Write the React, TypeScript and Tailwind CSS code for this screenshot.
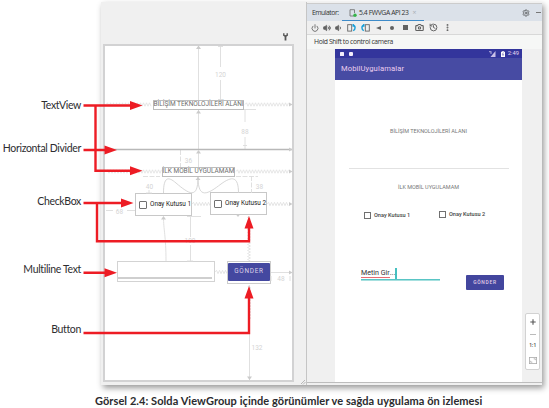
import React from "react";
import { Settings, Power, Volume2, Volume1, Camera, History, MoreVertical } from "lucide-react";

function zigzag(x1: number, x2: number, y: number) {
  let d = `M${x1} ${y}`;
  let up = true;
  for (let x = x1 + 1.5; x <= x2; x += 1.5) {
    d += ` L${x} ${up ? y - 1.7 : y + 1.7}`;
    up = !up;
  }
  return d;
}

function zigzagDown(x: number, y1: number, y2: number) {
  let d = `M${x} ${y1}`;
  let left = true;
  for (let y = y1 + 1.5; y <= y2; y += 1.5) {
    d += ` L${left ? x - 1.5 : x + 1.5} ${y}`;
    left = !left;
  }
  return d;
}

function Label({ children, className }: { children: string; className: string }) {
  return (
    <div className={`flex h-4 items-center justify-end whitespace-nowrap pr-5 text-[10.5px] tracking-[-0.34px] text-[#2d2d30] ${className}`}>
      {children}
    </div>
  );
}

/* Constraint handles, springs and margin values of the blueprint */
function Constraints() {
  return (
    <svg className="pointer-events-none absolute left-0 top-0" width="549" height="408" fill="none" stroke="#dcdcdc" strokeWidth="0.9">
      <path d="M198.5 47V100M198.5 110V149M198.5 151V167M220.5 46V67M220.5 80V100M218 46.5H223M218 99.5H223M245 110V122M245 137V149M243 145.5H247M244 109.5H256" />
      <path d="M180.5 150V167M251.5 176V193M143 176.5H160M236 176.5H258" strokeDasharray="5 1.5" />
      <path d="M149 190V193M146 193H152" />
      <path d="M163.5 193C163.5 177 168 176 176 183C189 194 198 200 198 177M238.5 193C238.5 176 232 176 221 184C208 194 198 200 198 177" stroke="#d2d2d2" />
      <path d="M106 210.5H113M127 210.5H135M163.5 217C163.5 230 166 236 166 261M190.5 217V237M190.5 245V261M187 216.5H201M187 261H193" />
      <path d="M249.5 285V380M271 272.5H291M271 276V281M290 276V281" />
      <path d="M105.5 149.5H292" stroke="#b8b8b8" strokeWidth="1.4" />
      <g strokeWidth="0.8" stroke="#e0e0e0">
        <path d={zigzag(106, 152, 104.5)} />
        <path d={zigzag(245, 289, 104.5)} />
        <path d={zigzag(106, 162, 171.5)} />
        <path d={zigzag(236, 289, 171.5)} />
        <path d={zigzag(192, 210, 204)} />
        <path d={zigzag(267, 289, 204)} />
        <path d={zigzag(215, 227, 272)} />
        <path d={zigzagDown(249, 216, 261)} />
        <path d={zigzagDown(249.5, 285, 320)} />
      </g>
      <g stroke="none" fill="#cbcbcb">
        <path d="M198.5 45.5L201 49H196ZM198.5 110L201 113.5H196ZM198.5 150L201 153.5H196ZM198 177L200.5 180H195.5ZM163.5 216L166 219.5H161ZM249.5 380L252 376.5H247ZM240 214.5H236L238 217Z" />
        <path d="M292.5 104.5L289 102.5V106.5ZM292.5 171.5L289 169.5V173.5ZM292.5 204L289 202V206ZM292.5 272.5L289 270.5V274.5ZM292.5 149.5L289 147.5V151.5Z" />
      </g>
      <g stroke="none" fill="#d4d4d4" fontFamily="Roboto, sans-serif" fontSize="6.5" textAnchor="middle">
        <text x="220.5" y="76.5">120</text>
        <text x="245" y="133.5">88</text>
        <text x="188.5" y="162.5">36</text>
        <text x="149.5" y="189">40</text>
        <text x="259.5" y="188.5">38</text>
        <text x="119.5" y="213.5">68</text>
        <text x="190" y="242.5">100</text>
        <text x="281" y="281">48</text>
        <text x="257" y="350">132</text>
      </g>
    </svg>
  );
}

/* Red callout arrows joining the labels to the views */
function Arrows() {
  return (
    <svg className="pointer-events-none absolute left-0 top-0" width="549" height="408" fill="none" stroke="#ed1c24" strokeWidth="2.4">
      <path d="M83.5 105.5H132M95.5 105.5V170.7H132" />
      <path d="M83.5 150H106M83.5 272.8H106" />
      <path d="M83.5 203H123M97 203V241.3H249V227" />
      <path d="M83.5 333H249V297" />
      <g fill="#ed1c24" stroke="none">
        <path d="M142.5 105.5L130 101V110ZM142.5 170.7L130 166.2V175.2ZM117 150L104.5 145.5V154.5ZM133.5 203L121 198.5V207.5ZM117 272.8L104.5 268.3V277.3Z" />
        <path d="M249 216L244.5 228.5H253.5ZM249 286L244.5 298.5H253.5Z" />
      </g>
    </svg>
  );
}

/* Views dropped on the layout editor's canvas, offsets relative to the canvas */
function DesignCanvas() {
  return (
    <div className="relative ml-[2px] mt-[42px] h-[338px] w-[191px] border-2 border-[#d2d2d3] bg-white font-[Roboto,sans-serif] text-[#6e6e6e]">
      <div className="absolute left-[48px] top-[54px] flex h-[10px] w-[91px] items-center justify-center whitespace-nowrap border border-[#bdbdbd] bg-white text-[6.5px] tracking-[-0.02px]">
        BİLİŞİM TEKNOLOJİLERİ ALANI
      </div>
      <div className="absolute left-[57px] top-[121px] flex h-[10px] w-[73px] items-center justify-center whitespace-nowrap border border-[#bdbdbd] bg-white text-[6.5px] tracking-[-0.02px]">
        İLK MOBİL UYGULAMAM
      </div>
      <BlueprintCheck className="left-[30px] top-[147px]" text="Onay Kutusu 1" />
      <BlueprintCheck className="left-[105px] top-[146px]" text="Onay Kutusu 2" />
      <div className="absolute left-[12px] top-[215px] flex h-[21px] w-[98px] items-end border border-[#d3d3d3] bg-white pb-[2px] pr-[2px]">
        <div className="h-[2px] w-full bg-[#cfcfcf]" />
      </div>
      <div className="absolute left-[122px] top-[215px] h-[23px] w-[44px] border border-[#ccc] bg-white pt-px">
        <div className="flex h-[18px] items-center justify-center rounded-[1px] bg-[#4448a0] text-[6.4px] tracking-[0.72px] text-[#ded2e8]">
          GÖNDER
        </div>
      </div>
    </div>
  );
}

function BlueprintCheck({ text, className }: { text: string; className: string }) {
  return (
    <div className={`absolute flex h-[23px] w-[57px] items-center gap-[3px] whitespace-nowrap border border-[#c8c8c8] bg-white pl-[3px] ${className}`}>
      <span className="size-[8px] shrink-0 rounded-[1px] border border-[#707070]" />
      <span className="text-[6.4px] text-[#222]">{text}</span>
    </div>
  );
}

function PhoneCheck({ text, className }: { text: string; className: string }) {
  return (
    <div className={`flex w-[75px] items-center gap-[3px] whitespace-nowrap ${className}`}>
      <span className="size-[7px] shrink-0 border border-[#707070]" />
      <span className="text-[5.6px] font-medium leading-[8px] text-[#444]">{text}</span>
    </div>
  );
}

function RotateIcon({ flip = false }: { flip?: boolean }) {
  return (
    <svg width="9" height="8" viewBox="0 0 9 8" fill="none" className={flip ? "-scale-x-100" : ""}>
      <rect x="0.7" y="0.7" width="4" height="6.4" stroke="#666" strokeWidth="0.9" />
      <path d="M6 1.3C8.7 1.6 8.7 5.5 6.2 6.7M6.2 0V2.8" stroke="#169fd8" strokeWidth="1.4" />
    </svg>
  );
}

function Phone() {
  return (
    <div className="flex h-[333px] w-[187px] flex-col bg-white font-[Roboto,sans-serif]">
      <div className="flex h-[9px] shrink-0 items-center bg-[#33359c] pl-[5px] pr-[3px] text-white">
        <span className="size-[4px] rounded-[0.5px] bg-[#f3eefa]" />
        <span className="ml-[5px] size-[4px] rounded-[1px] bg-[#f3eefa]" />
        <svg className="ml-auto mr-[5px]" width="7" height="6" viewBox="0 0 7 6">
          <path d="M0 0.7H2.5M1 2H3" stroke="#d6ccee" strokeWidth="0.8" />
          <path d="M6.5 0V6H1.5Z" fill="#c9c0e7" />
        </svg>
        <svg width="4" height="6" viewBox="0 0 4 6">
          <path d="M1.3 0H2.7V0.7H4V6H0V0.7H1.3Z" fill="#fff" />
          <path d="M2.4 1.5L1.3 3.5H2.6L1.7 5" fill="none" stroke="#5555a8" strokeWidth="0.6" />
        </svg>
        <span className="ml-[3px] text-[5.8px] leading-none text-[#e6dcf2]">2:49</span>
      </div>
      <div className="flex h-[22px] shrink-0 items-center bg-[#474ba3] pl-[6px] text-[7.6px] tracking-[0.12px] text-[#eccfef]">
        MobilUygulamalar
      </div>
      <div className="mt-[47px] text-center text-[5.5px] leading-[8px] text-[#777]">BİLİŞİM TEKNOLOJİLERİ ALANI</div>
      <div className="ml-[14px] mt-[33px] h-px w-[160px] bg-[#e2e2e2]" />
      <div className="mt-[14px] text-center text-[5.5px] leading-[8px] text-[#777]">İLK MOBİL UYGULAMAM</div>
      <div className="mt-[19px] flex pl-[29px]">
        <PhoneCheck text="Onay Kutusu 1" className="pt-px" />
        <PhoneCheck text="Onay Kutusu 2" className="pb-px" />
      </div>
      <div className="mt-[49px] flex items-start pl-[26px]">
        <div className="flex h-[12px] w-[79px] items-start border-b border-[#59c5c5] text-[7.1px] leading-[10px] text-[#333] shadow-[0_1px_0_#a6e0df]">
          <span className="h-[10px] border-b border-[#e66b70]">Metin Gir</span>
          <span>...</span>
          <span className="h-[11px] w-[1.5px] shrink-0 bg-[#45c0c0]" />
        </div>
        <div className="ml-[26px] mt-[7px] flex h-[15px] w-[38px] items-center justify-center rounded-[1px] bg-[#43469e] text-[4.9px] font-medium tracking-[0.75px] text-[#e2cfe7]">
          GÖNDER
        </div>
      </div>
    </div>
  );
}

function Emulator() {
  return (
    <div className="flex w-[236px] flex-col border-l border-[#c5c5c5] bg-[#f0f0f0] font-['Open_Sans',sans-serif] text-[#333]">
      <div className="mt-px h-px bg-[#ccc]" />
      <div className="flex h-[17px] items-stretch bg-[#dbe1e9] pl-[5px] text-[6.8px]">
        <span className="mt-[2px] flex w-[30px] items-center tracking-[-0.48px]">Emulator:</span>
        <div className="flex w-[82px] items-center whitespace-nowrap border-b-[1.5px] border-[#3e8bc9] pl-[7px] pt-[2px]">
          <svg width="8" height="8" viewBox="0 0 8 8" fill="none">
            <path d="M5 7H1V0.7H5.5V4" stroke="#777" strokeWidth="0.9" />
            <circle cx="6" cy="6.3" r="1.7" fill="#36b44a" />
          </svg>
          <span className="ml-[2px] tracking-[-0.4px]">5.4 FWVGA API 23</span>
          <span className="ml-[4px] text-[#a9afb5]">×</span>
        </div>
        <div className="ml-auto flex items-center pr-px">
          <Settings size={8} strokeWidth={3} color="#6a6d70" />
          <span className="ml-[6px] h-px w-[5px] bg-[#777]" />
        </div>
      </div>
      <div className="flex h-[14px] items-center border-b border-[#d8d8d8] bg-[#efefef] pl-[4px] text-[#616161]">
        <Power size={8} strokeWidth={2.5} />
        <Volume2 className="ml-[4px]" size={8} strokeWidth={2.5} fill="#616161" />
        <Volume1 className="ml-[4px]" size={8} strokeWidth={2.5} fill="#616161" />
        <span className="ml-[4px]"><RotateIcon /></span>
        <span className="ml-[5px]"><RotateIcon flip /></span>
        <span className="ml-[6px] h-0 w-0 border-y-[2.5px] border-r-[5px] border-y-transparent border-r-[#616161]" />
        <span className="ml-[9px] size-[4px] rounded-full bg-[#616161]" />
        <span className="ml-[9px] size-[5px] bg-[#616161]" />
        <Camera className="ml-[7px]" size={9} strokeWidth={3} />
        <History className="ml-[5px]" size={9} strokeWidth={2.5} />
        <MoreVertical className="ml-[5px]" size={9} strokeWidth={3} />
      </div>
      <div className="flex h-[14px] items-center whitespace-nowrap bg-[#f6f7f6] pl-[7px] text-[6.8px] tracking-[-0.36px]">Hold Shift to control camera</div>
      <div className="flex h-[334px] border-b border-[#bdbdbd] pl-[28px]">
        <Phone />
        <div className="ml-[3px] mt-[264px] flex h-[57px] w-[15px] flex-col items-center justify-around rounded-[2px] border border-[#d2d2d2] bg-white py-px">
          <svg width="6" height="6" viewBox="0 0 6 6" stroke="#555" strokeWidth="1.1"><path d="M3 0.3V5.7M0.3 3H5.7" /></svg>
          <span className="h-px w-[6px] bg-[#bbb]" />
          <span className="text-[5.5px] font-semibold leading-none tracking-[-0.2px] text-[#555]">1:1</span>
          <svg width="8" height="7" viewBox="0 0 8 7" fill="none" stroke="#aaa" strokeWidth="0.8">
            <rect x="0.4" y="0.4" width="7.2" height="6.2" />
            <path d="M4.7 1.8H6.3V3.2M3.3 5.2H1.7V3.8" />
          </svg>
        </div>
      </div>
    </div>
  );
}

export default function App() {
  return (
    <div className="relative flex h-[408px] w-[549px] flex-col overflow-hidden bg-white font-[Lato,sans-serif]">
      <div className="flex h-[385px]">
        <div className="w-[101px] shrink-0">
          <Label className="mt-[98px]">TextView</Label>
          <Label className="mt-[27px]">Horizontal Divider</Label>
          <Label className="mt-[37px]">CheckBox</Label>
          <Label className="mt-[52px]">Multiline Text</Label>
          <Label className="mt-[44px]">Button</Label>
        </div>
        <div className="relative mt-[2px] flex h-[383px] w-[441px] bg-[#f0f0f0] shadow-[2px_3px_6px_#999]">
          <div className="w-[205px] shrink-0">
            <DesignCanvas />
          </div>
          <Emulator />
          <svg className="absolute left-[182px] top-[31px]" width="5" height="8" viewBox="0 0 5 8" fill="none" stroke="#555">
            <path d="M0.8 0.3V2.3L2.5 3.3L4.2 2.3V0.3" strokeWidth="1.4" />
            <path d="M2.5 2.3V7.5" strokeWidth="1.8" />
          </svg>
          <svg className="absolute bottom-0 left-[199px]" width="6" height="6" stroke="#aaa" strokeWidth="0.8">
            <path d="M1 5L5 1M3 5.5L5.5 3" />
          </svg>
        </div>
      </div>
      <div className="whitespace-nowrap pl-[95px] pt-[8px] text-[11px] font-bold leading-[16px] tracking-[0.065px] text-[#2b2b2e]">
        Görsel 2.4: Solda ViewGroup içinde görünümler ve sağda uygulama ön izlemesi
      </div>
      <Constraints />
      <Arrows />
    </div>
  );
}
